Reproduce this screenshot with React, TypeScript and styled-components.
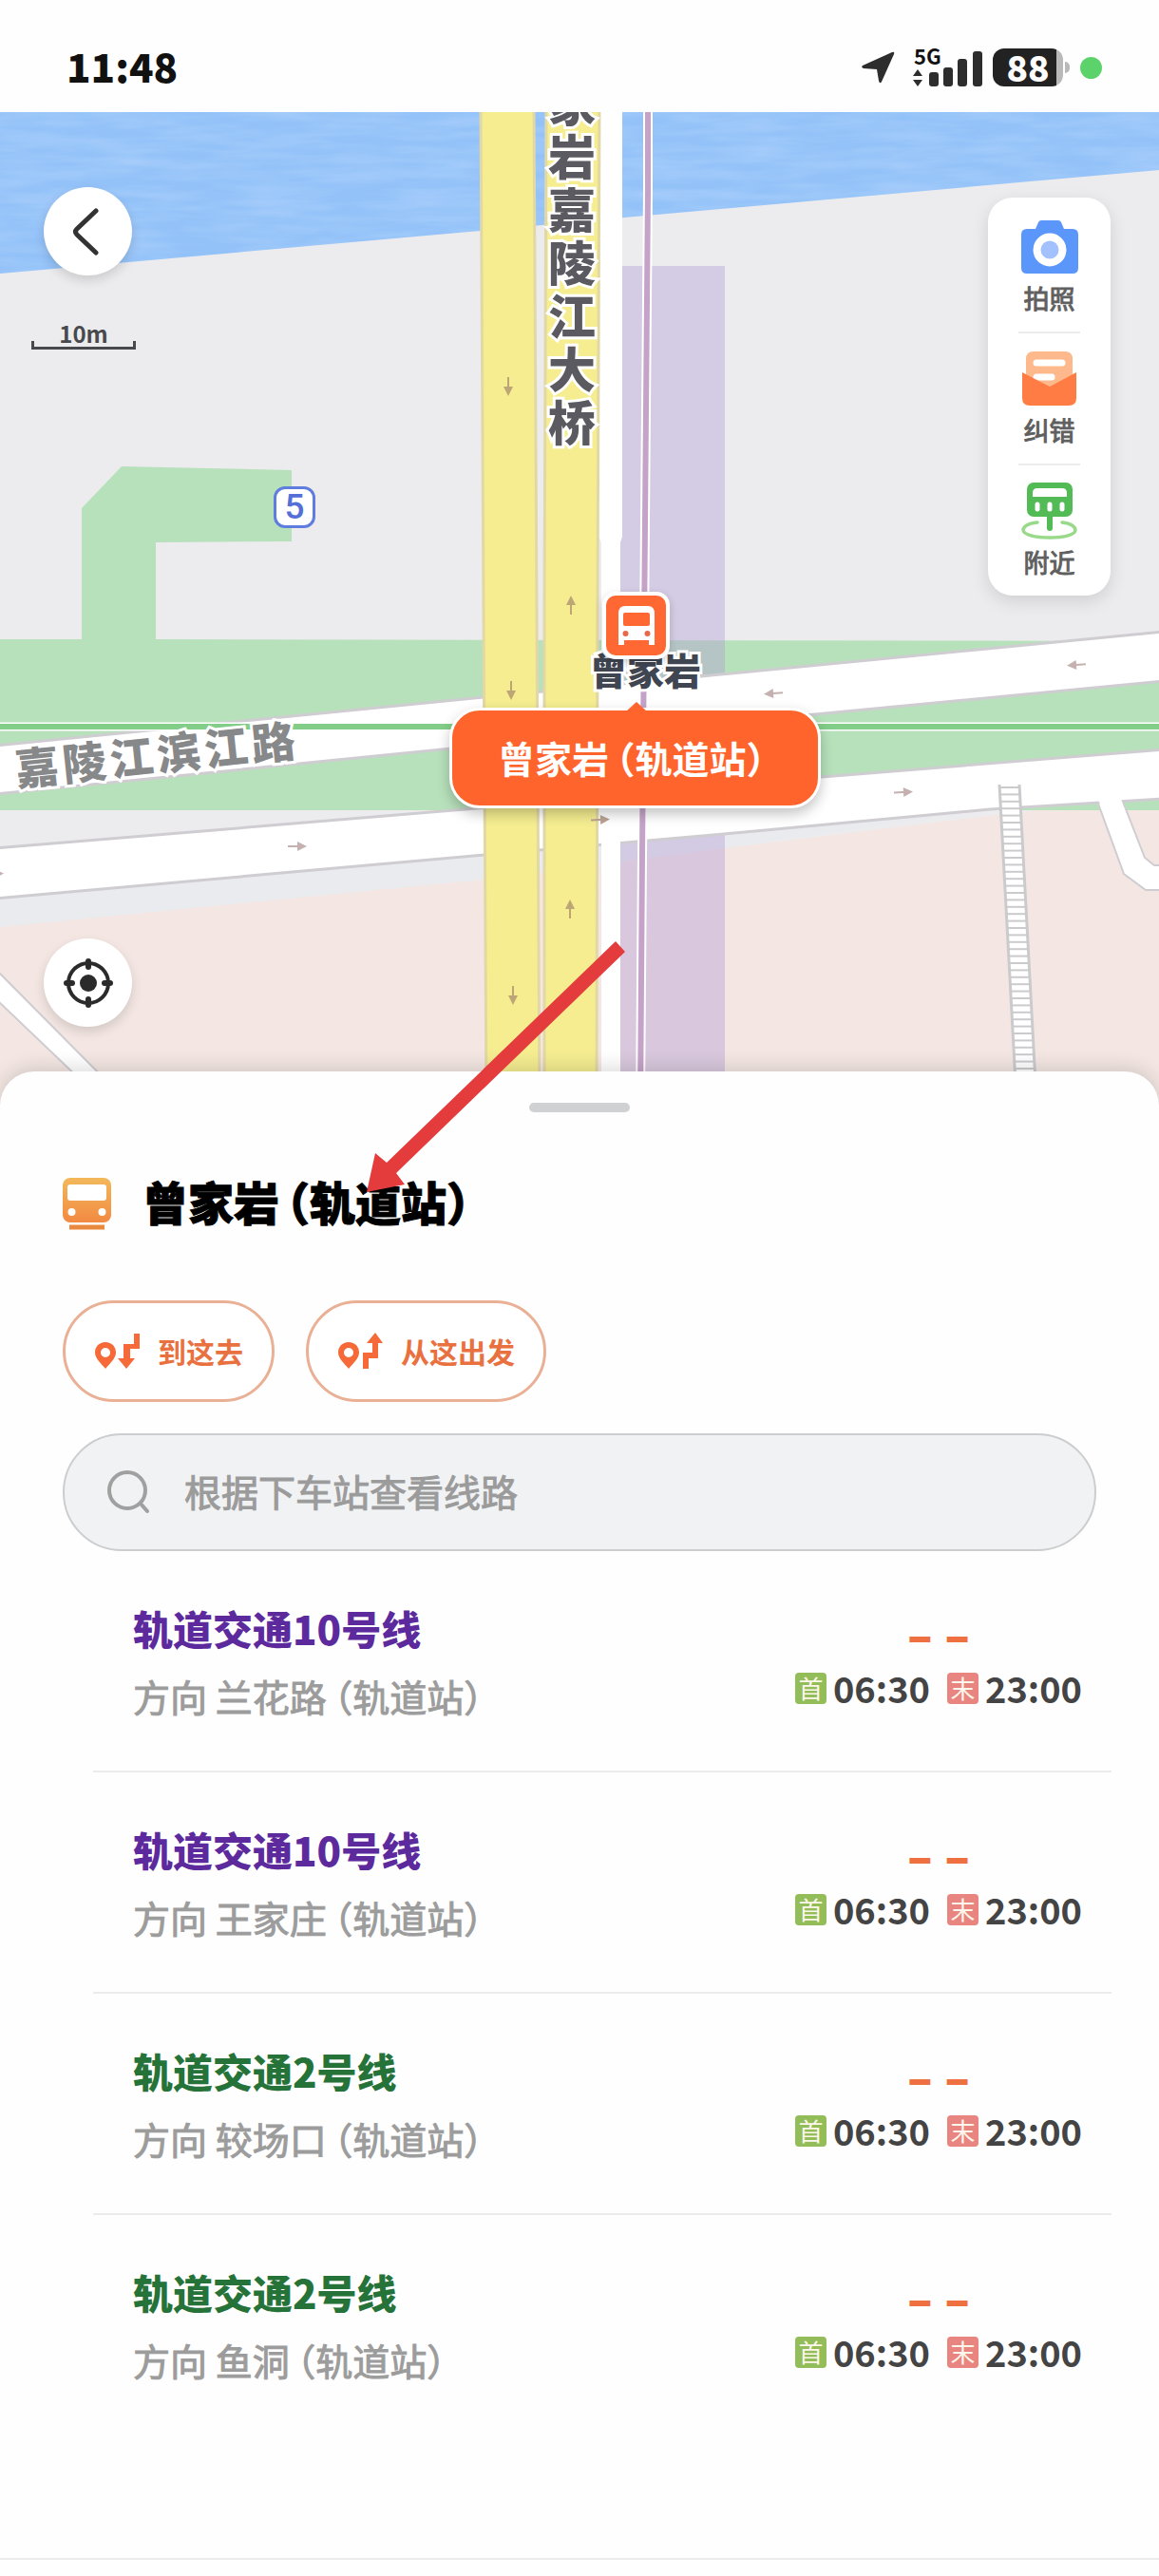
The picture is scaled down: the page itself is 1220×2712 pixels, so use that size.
import React from 'react';
import styled, { createGlobalStyle } from 'styled-components';

const GlobalStyle = createGlobalStyle`
  *, *::before, *::after { box-sizing: border-box; }
  body {
    margin: 0;
    background: #fefefe;
    font-family: "Noto Sans CJK SC", "Noto Sans", sans-serif;
    color: #333;
  }
  button, input { font-family: inherit; }
  svg { display: block; flex: none; }
`;

const Page = styled.div`
  min-height: 100vh;
  display: flex;
  flex-direction: column;
`;

/* ---------- status bar ---------- */

const StatusBar = styled.header`
  height: 118px;
  padding: 24px 60px 0 70px;
  display: flex;
  align-items: center;
  justify-content: space-between;
`;

const Clock = styled.time`
  padding-bottom: 4px;
  font-size: 42px;
  line-height: 60px;
  font-weight: 900;
  color: #111;
`;

const StatusIcons = styled.div`
  display: flex;
  align-items: center;
`;

const Network = styled.div`
  position: relative;
  margin: 0 11px 0 18px;
`;

const NetworkType = styled.span`
  position: absolute;
  left: 1px;
  top: -6px;
  font-size: 22px;
  line-height: 26px;
  font-weight: 700;
  color: #111;
`;

const Battery = styled.div`
  display: flex;
  align-items: center;
  gap: 2px;
  margin-right: 11px;
`;

const BatteryBody = styled.div`
  width: 74px;
  height: 40px;
  border-radius: 12px;
  background: linear-gradient(to right, #222 67px, #b9b9b9 67px);
  color: #fff;
  font-size: 37px;
  line-height: 38px;
  font-weight: 900;
  text-align: center;
`;

const BatteryNub = styled.div`
  width: 5px;
  height: 12px;
  border-radius: 0 5px 5px 0;
  background: #b9b9b9;
`;

const PrivacyDot = styled.div`
  width: 23px;
  height: 23px;
  border-radius: 50%;
  background: #5bd36a;
`;

/* ---------- map ---------- */

const MapArea = styled.section`
  position: relative;
  height: 1046px;
  overflow: hidden;
  background: #ececee;
`;

const MapCanvas = styled.svg`
  width: 100%;
  height: 100%;
`;

const RoundButton = styled.button<{ $top: number }>`
  position: absolute;
  left: 46px;
  top: ${(p) => p.$top}px;
  width: 93px;
  height: 93px;
  padding: 0;
  border: 0;
  border-radius: 50%;
  background: #fff;
  display: flex;
  align-items: center;
  justify-content: center;
  box-shadow: 0 5px 12px rgba(0, 0, 0, 0.14);
`;

const ScaleBar = styled.div`
  position: absolute;
  left: 33px;
  top: 220px;
  width: 110px;
  height: 30px;
  text-align: center;
  font-size: 24px;
  line-height: 26px;
  font-weight: 700;
  color: #47494c;

  &::after {
    content: '';
    position: absolute;
    left: 0;
    right: 0;
    bottom: 0;
    height: 9px;
    border: solid #47494c;
    border-width: 0 3px 3px;
  }
`;

const MapText = styled.div`
  position: absolute;
  font-weight: 900;
  -webkit-text-stroke: 6px #fff;
  paint-order: stroke fill;
`;

const BridgeName = styled(MapText)`
  left: 577px;
  top: -40px;
  width: 50px;
  font-size: 50px;
  line-height: 56px;
  word-break: break-all;
  color: #5a5a60;
`;

const RoadName = styled(MapText)`
  left: 15px;
  top: 648px;
  display: flex;
  gap: 4px;
  font-size: 46px;
  line-height: 52px;
  transform: rotate(-6deg);
  color: #87888a;
`;

const StationName = styled(MapText)`
  left: 621px;
  top: 558px;
  font-size: 39px;
  line-height: 56px;
  color: #3f4551;
`;

const ExitBadge = styled.div`
  position: absolute;
  left: 288px;
  top: 394px;
  width: 44px;
  height: 44px;
  border: 3px solid #5f7dde;
  border-radius: 12px;
  background: #fff;
  color: #5470d8;
  font: 500 37px/38px Roboto, sans-serif;
  text-align: center;
`;

const StationMarker = styled.div`
  position: absolute;
  left: 634px;
  top: 505px;
  width: 71px;
  height: 71px;
  border: 4px solid #fff;
  border-radius: 14px;
  background: #ff6733;
  display: flex;
  align-items: center;
  justify-content: center;
  box-shadow: 0 3px 8px rgba(0, 0, 0, 0.18);
`;

const Callout = styled.button`
  position: absolute;
  left: 473px;
  top: 627px;
  width: 391px;
  height: 106px;
  padding: 0 8px 2px 0;
  border: 3px solid #fff;
  border-radius: 32px;
  background: #ff642c;
  color: #fff;
  font-size: 39px;
  line-height: 60px;
  font-weight: 700;
  white-space: nowrap;
  box-shadow: 0 6px 14px rgba(0, 0, 0, 0.24);

  &::before {
    content: '';
    position: absolute;
    left: 183px;
    top: -9px;
    border: solid transparent;
    border-width: 0 11px 10px;
    border-bottom-color: #ff642c;
  }
`;

const Suffix = styled.span`
  margin-left: 8px;
  font-feature-settings: 'halt';
`;

const ToolPanel = styled.nav`
  position: absolute;
  right: 51px;
  top: 90px;
  width: 129px;
  padding: 4px 32px 0;
  border-radius: 26px;
  background: #fff;
  box-shadow: 0 6px 18px rgba(0, 0, 0, 0.12);
`;

const Tool = styled.button`
  width: 100%;
  padding: 18px 0 15px;
  border: 0;
  border-bottom: 2px solid #ececec;
  background: none;
  display: flex;
  flex-direction: column;
  align-items: center;
  gap: 4px;
  font-size: 27px;
  line-height: 40px;
  -webkit-text-stroke: 1px currentColor;
  white-space: nowrap;
  color: #5f5f5f;

  &:last-child { border-bottom: 0; }
`;

const Pointer = styled.svg`
  position: absolute;
  left: 380px;
  top: 985px;
  z-index: 3;
`;

/* ---------- sheet ---------- */

const Sheet = styled.main`
  position: relative;
  z-index: 2;
  flex: 1;
  margin-top: -36px;
  border-radius: 36px 36px 0 0;
  background: #fefefe;
  box-shadow: 0 -4px 20px rgba(0, 0, 0, 0.14);
`;

const Handle = styled.div`
  width: 106px;
  height: 10px;
  margin: 0 auto;
  border-radius: 5px;
  background: #d0d1d2;
`;

const Grip = styled.div`
  padding: 33px 0 64px;
`;

const StationHeader = styled.div`
  display: flex;
  align-items: center;
  gap: 32px;
  padding: 0 66px;
`;

const StationTitle = styled.h1`
  margin: 0;
  padding-bottom: 6px;
  font-size: 48px;
  line-height: 58px;
  font-weight: 900;
  color: #000;
  -webkit-text-stroke: 1px #000;
`;

const Actions = styled.div`
  display: flex;
  gap: 33px;
  padding: 70px 66px 33px;
`;

const ActionButton = styled.button`
  height: 107px;
  padding: 0 30px 2px;
  border: 3px solid #eab096;
  border-radius: 54px;
  background: #fff;
  display: flex;
  align-items: center;
  gap: 19px;
  font-size: 30px;
  line-height: 40px;
  font-weight: 700;
  color: #e9713f;
`;

const SearchBox = styled.label`
  height: 124px;
  margin: 0 66px;
  padding: 0 42px;
  border: 2px solid #cbcdce;
  border-radius: 62px;
  background: #f1f2f4;
  display: flex;
  align-items: center;
  gap: 36px;
`;

const SearchInput = styled.input`
  flex: 1;
  min-width: 0;
  height: 60px;
  padding: 0 0 4px;
  border: 0;
  outline: 0;
  background: none;
  font-size: 39px;
  color: #333;

  &::placeholder {
    color: #9b9b9b;
    opacity: 1;
    -webkit-text-stroke: 1px #9b9b9b;
  }
`;

const LineList = styled.ul`
  margin: 0;
  padding: 0 50px 0 98px;
  list-style: none;
`;

const LineRow = styled.li`
  display: flex;
  align-items: center;
  justify-content: space-between;
  padding: 51px 31px 45px 42px;
  border-bottom: 2px solid #ececec;

  &:last-child { border-bottom-color: transparent; }
`;

const LineInfo = styled.div`
  display: grid;
  gap: 11px;
  padding-bottom: 4px;
  line-height: 60px;
`;

const LineName = styled.h2<{ $color: string }>`
  margin: 0;
  font-size: 42px;
  font-weight: 900;
  color: ${(p) => p.$color};
`;

const Direction = styled.p`
  margin: 0;
  font-size: 39px;
  color: #9c9c9c;
  -webkit-text-stroke: 1px currentColor;
`;

const Schedule = styled.div`
  display: flex;
  flex-direction: column;
  align-items: center;
  gap: 11px;
`;

const Waiting = styled.div`
  display: flex;
  gap: 17px;
  height: 40px;
  font: 700 40px/34px "Liberation Sans", sans-serif;
  color: #ee6f40;
  -webkit-text-stroke: 2px currentColor;
`;

const Times = styled.div`
  display: flex;
  align-items: center;
  gap: 18px;
`;

const TimeItem = styled.div`
  display: flex;
  align-items: center;
  gap: 7px;
  font-size: 38px;
  line-height: 40px;
  font-weight: 700;
  color: #444;
`;

const TimeBadge = styled.span<{ $color: string }>`
  width: 33px;
  height: 33px;
  border-radius: 4px;
  background: ${(p) => p.$color};
  color: #fdf6ea;
  font-size: 26px;
  line-height: 32px;
  font-weight: 400;
  text-align: center;
`;

const SheetFooter = styled.div`
  margin-top: 128px;
  border-top: 2px solid #ececec;
`;

/* ---------- drawings ---------- */

const PURPLE = '#5c2a9d';
const GREEN = '#267339';

const lines = [
  { name: '轨道交通10号线', color: PURPLE, to: '兰花路' },
  { name: '轨道交通10号线', color: PURPLE, to: '王家庄' },
  { name: '轨道交通2号线', color: GREEN, to: '较场口' },
  { name: '轨道交通2号线', color: GREEN, to: '鱼洞' },
];

const flowArrows = [
  { x: 535, y: 407, r: 90, c: '#bda676' },
  { x: 538, y: 727, r: 90, c: '#bda676' },
  { x: 540, y: 1048, r: 90, c: '#bda676' },
  { x: 601, y: 637, r: -90, c: '#bda676' },
  { x: 600, y: 957, r: -90, c: '#bda676' },
  { x: 814, y: 730, r: 176, c: '#c5b2b0' },
  { x: 1133, y: 700, r: 176, c: '#c5b2b0' },
  { x: 313, y: 891, r: 0, c: '#c5b2b0' },
  { x: 951, y: 834, r: -3, c: '#c5b2b0' },
  { x: 632, y: 863, r: -3, c: '#bba393' },
  { x: -6, y: 920, r: -3, c: '#c5b2b0' },
];

const rungs = Array.from({ length: 41 }, (_, i) => 829 + i * 7.4);

const MapDrawing = () => (
  <MapCanvas viewBox="0 118 1220 1046" preserveAspectRatio="xMidYMin slice" aria-hidden="true">
    <defs>
      <filter id="ripples" x="0" y="0" width="100%" height="100%">
        <feTurbulence type="fractalNoise" baseFrequency="0.012 0.09" numOctaves="3" seed="4" />
        <feColorMatrix values="0 0 0 0 1  0 0 0 0 1  0 0 0 0 1  0.3 0 0 0 -0.1" />
        <feComposite in2="SourceGraphic" operator="in" />
      </filter>
    </defs>
    <rect x="0" y="118" width="1220" height="1046" fill="#ececee" />
    <path d="M0 118H1220V179L657 229L505 243L0 288Z" fill="#93c2f9" />
    <path d="M0 118H1220V179L657 229L505 243L0 288Z" filter="url(#ripples)" />

    <path d="M0 673H86V535L128 491L307 495V570L164 571V673L1220 675V853H0Z" fill="#b7e1bb" />
    <path d="M0 893L490 852L1042 852L762 893L509 926L0 976Z" fill="#e9ebef" />
    <path d="M0 976L509 926L762 893L1090 853H1220V1164H0Z" fill="#f4e7e3" />
    <rect x="653" y="280" width="110" height="884" fill="rgba(178,155,212,0.4)" />

    <g fill="#fff" stroke="#cfcdd1" strokeWidth="3">
      <path d="M-5 785L509 734L738 712L1225 665V717L858 752L475 788L-5 836Z" />
      <path d="M-5 893L490 852L865 818L1225 789V841L1042 852L762 878L510 900L-5 946Z" />
      <path d="M-5 1020L125 1151V1180H130L-5 1051Z" strokeWidth="2" />
      <path d="M1156 846L1183 920L1206 937H1225V911H1215L1205 903L1182 844" strokeWidth="2" />
    </g>
    <path d="M1154 838L1159 848L1181 846L1180 836Z" fill="#fff" />

    <path d="M1052 826H1073L1090 1140H1069Z" fill="#fff" />
    <g stroke="#cbcacd" strokeWidth="2">
      <path d="M1052 826L1069 1140M1073 826L1090 1140" strokeWidth="3" />
      {rungs.map((y) => {
        const shift = (y - 826) * 0.054;
        return <path key={y} d={`M${1052 + shift} ${y}H${1073 + shift}`} />;
      })}
    </g>

    <path d="M0 765H1220" stroke="#fff" strokeWidth="9" />
    <path d="M0 765H1220" stroke="#82cd88" strokeWidth="6" />

    <path d="M630 118H655V565L653 571V1164H633V571L630 565Z" fill="#fff" />
    <path d="M633 666H653V712L633 716Z" fill="#fff" />
    <path d="M682 118L682 200L676 900L674 1164" fill="none" stroke="#fff" strokeWidth="10" />
    <path d="M682 118L682 200L676 900L674 1164" fill="none" stroke="#c5a3c9" strokeWidth="6" />

    <g fill="#f5ed90" stroke="#e2d8a6" strokeWidth="3">
      <path d="M506 110L509 640L512 1170H568L565 640L562 110Z" />
      <path d="M575 110L573 640V1170H628L629 640L631 110Z" />
    </g>

    {flowArrows.map((a) => (
      <g key={`${a.x}-${a.y}`} transform={`translate(${a.x} ${a.y}) rotate(${a.r})`}>
        <path d="M-10 0H4" stroke={a.c} strokeWidth="2" />
        <path d="M0 -5L10 0L0 5Z" fill={a.c} />
      </g>
    ))}
  </MapCanvas>
);

const CameraIcon = () => (
  <svg width="60" height="60" viewBox="0 0 60 60">
    <path d="M15 11L18 4Q19 2 21 2H39Q41 2 42 4L45 11H54Q60 11 60 17V52Q60 58 54 58H6Q0 58 0 52V17Q0 11 6 11Z" fill="#5b96fb" />
    <circle cx="30" cy="33" r="13.500" fill="#a3c2fd" stroke="#fff" strokeWidth="8" />
  </svg>
);

const EnvelopeIcon = () => (
  <svg width="60" height="60" viewBox="0 0 60 60">
    <path d="M5 30V9Q5 1 13 1H46Q54 1 54 9V30L30 42Z" fill="#fdb98c" />
    <path d="M16 13H43M16 28H32" stroke="#fff" strokeWidth="7" strokeLinecap="round" />
    <path d="M1 23L30 38L58 23V50Q58 58 50 58H9Q1 58 1 50Z" fill="#ff7d45" />
  </svg>
);

const NearbyIcon = () => (
  <svg width="60" height="60" viewBox="0 0 60 60">
    <path d="M17 42C6 43 2 47 2 50C2 55 15 58 30 58S57 55 57 50C57 47 53 43 43 42" fill="none" stroke="#98d98a" strokeWidth="3.500" strokeLinecap="round" />
    <rect x="6" y="0" width="48" height="36" rx="7" fill="#52bb55" />
    <path d="M12 15V11Q12 6 17 6H43Q48 6 48 11V15Z" fill="#fff" />
    <path d="M17 23V28M30 23V28M43 23V28" stroke="#fff" strokeWidth="5" strokeLinecap="round" />
    <path d="M30 34V48" stroke="#52bb55" strokeWidth="6" strokeLinecap="round" />
  </svg>
);

const MarkerBus = () => (
  <svg width="40" height="42" viewBox="0 0 40 42">
    <path d="M8 0H32Q39 0 39 8V41H33V36H7V41H1V8Q1 0 8 0Z" fill="#fff" />
    <rect x="6" y="7" width="28" height="14" rx="2" fill="#ff6733" />
    <circle cx="8.500" cy="29" r="3" fill="#e8694a" />
    <circle cx="31.500" cy="29" r="3" fill="#e8694a" />
  </svg>
);

const TrainIcon = () => (
  <svg width="52" height="56" viewBox="0 0 52 56">
    <defs>
      <linearGradient id="train" x1="0" y1="0" x2="0" y2="1">
        <stop offset="0" stopColor="#f3b85b" />
        <stop offset="1" stopColor="#f28a42" />
      </linearGradient>
    </defs>
    <rect x="0" y="1" width="51" height="47" rx="8" fill="url(#train)" />
    <rect x="5" y="8" width="41" height="17" rx="3" fill="#fff" />
    <circle cx="9.500" cy="37" r="4" fill="#fff" />
    <circle cx="41.500" cy="37" r="4" fill="#fff" />
    <path d="M7 53H44" stroke="#e8893f" strokeWidth="5" />
  </svg>
);

const RouteIcon = ({ up }: { up?: boolean }) => (
  <svg width="48" height="40" viewBox="0 0 48 40" fill="#f56a38">
    <path fillRule="evenodd" d="M12 11C5 11 1 16 1 22C1 28 7 33 12 39C17 33 23 28 23 22C23 16 19 11 12 11ZM12 17A5 5 0 1 1 12 27A5 5 0 1 1 12 17Z" />
    {up ? (
      <path d="M27 39V22H37V12H31L40 1L48 12H43V28H33V39Z" />
    ) : (
      <path d="M48 2V18H38V28H43L34 39L25 28H31V13H42V2Z" />
    )}
  </svg>
);

const App = () => (
  <Page>
    <GlobalStyle />
    <StatusBar>
      <Clock>11:48</Clock>
      <StatusIcons>
        <svg width="36" height="36" viewBox="0 0 36 36" aria-hidden="true">
          <path d="M1 16L32 2Q35 1 34 4L21 33Q19 36 18 32L16 20L2 19Q-1 18 1 16Z" fill="#2d2d2d" />
        </svg>
        <Network>
          <NetworkType>5G</NetworkType>
          <svg width="73" height="40" viewBox="0 0 73 40" fill="#2d2d2d" aria-hidden="true">
            <path d="M5 22L10 29H0ZM5 40L0 33H10Z" />
            <rect x="17" y="25" width="10" height="15" rx="3" />
            <rect x="32" y="20" width="10" height="20" rx="3" />
            <rect x="47" y="11" width="10" height="29" rx="3" />
            <rect x="63" y="3" width="10" height="37" rx="3" />
          </svg>
        </Network>
        <Battery>
          <BatteryBody>88</BatteryBody>
          <BatteryNub />
        </Battery>
        <PrivacyDot />
      </StatusIcons>
    </StatusBar>

    <MapArea>
      <MapDrawing />
      <BridgeName>家岩嘉陵江大桥</BridgeName>
      <RoadName>
        {Array.from('嘉陵江滨江路').map((ch, i) => (
          <span key={i}>{ch}</span>
        ))}
      </RoadName>
      <ExitBadge>5</ExitBadge>
      <StationName>曾家岩</StationName>
      <StationMarker>
        <MarkerBus />
      </StationMarker>
      <Callout type="button">
        曾家岩<Suffix>（轨道站）</Suffix>
      </Callout>

      <RoundButton type="button" $top={79} aria-label="返回">
        <svg width="40" height="50" viewBox="0 0 40 50">
          <path d="M28 3L8 22Q5 25 8 28L28 47" fill="none" stroke="#333" strokeWidth="5" strokeLinecap="round" />
        </svg>
      </RoundButton>
      <ScaleBar>10m</ScaleBar>
      <RoundButton type="button" $top={870} aria-label="定位">
        <svg width="52" height="52" viewBox="0 0 52 52" fill="none" stroke="#2b2b2b">
          <circle cx="26" cy="26" r="21" strokeWidth="4" />
          <path d="M26 3V9M26 43V49M3 26H9M43 26H49" strokeWidth="6" strokeLinecap="round" />
          <circle cx="26" cy="26" r="9" fill="#2b2b2b" stroke="none" />
        </svg>
      </RoundButton>

      <ToolPanel>
        <Tool type="button"><CameraIcon />拍照</Tool>
        <Tool type="button"><EnvelopeIcon />纠错</Tool>
        <Tool type="button"><NearbyIcon />附近</Tool>
      </ToolPanel>
    </MapArea>

    <Pointer width="284" height="275" viewBox="380 985 284 275" aria-hidden="true">
      <path d="M648 991L658 1002L417 1235L426 1247L386 1255L395 1214L407 1224Z" fill="#e43c3c" />
    </Pointer>

    <Sheet>
      <Grip>
        <Handle />
      </Grip>
      <StationHeader>
        <TrainIcon />
        <StationTitle>
          曾家岩<Suffix>（轨道站）</Suffix>
        </StationTitle>
      </StationHeader>
      <Actions>
        <ActionButton type="button"><RouteIcon />到这去</ActionButton>
        <ActionButton type="button"><RouteIcon up />从这出发</ActionButton>
      </Actions>
      <SearchBox>
        <svg width="48" height="48" viewBox="0 0 48 48" fill="none" stroke="#a0a0a0" strokeWidth="4" strokeLinecap="round">
          <circle cx="24" cy="22" r="19" />
          <path d="M38 36L45 44" />
        </svg>
        <SearchInput type="text" placeholder="根据下车站查看线路" aria-label="根据下车站查看线路" />
      </SearchBox>
      <LineList>
        {lines.map((line) => (
          <LineRow key={line.to}>
            <LineInfo>
              <LineName $color={line.color}>{line.name}</LineName>
              <Direction>
                方向 {line.to}<Suffix>（轨道站）</Suffix>
              </Direction>
            </LineInfo>
            <Schedule>
              <Waiting><span>–</span><span>–</span></Waiting>
              <Times>
                <TimeItem><TimeBadge $color="#92bd58">首</TimeBadge>06:30</TimeItem>
                <TimeItem><TimeBadge $color="#e98580">末</TimeBadge>23:00</TimeItem>
              </Times>
            </Schedule>
          </LineRow>
        ))}
      </LineList>
      <SheetFooter />
    </Sheet>
  </Page>
);

export default App;
